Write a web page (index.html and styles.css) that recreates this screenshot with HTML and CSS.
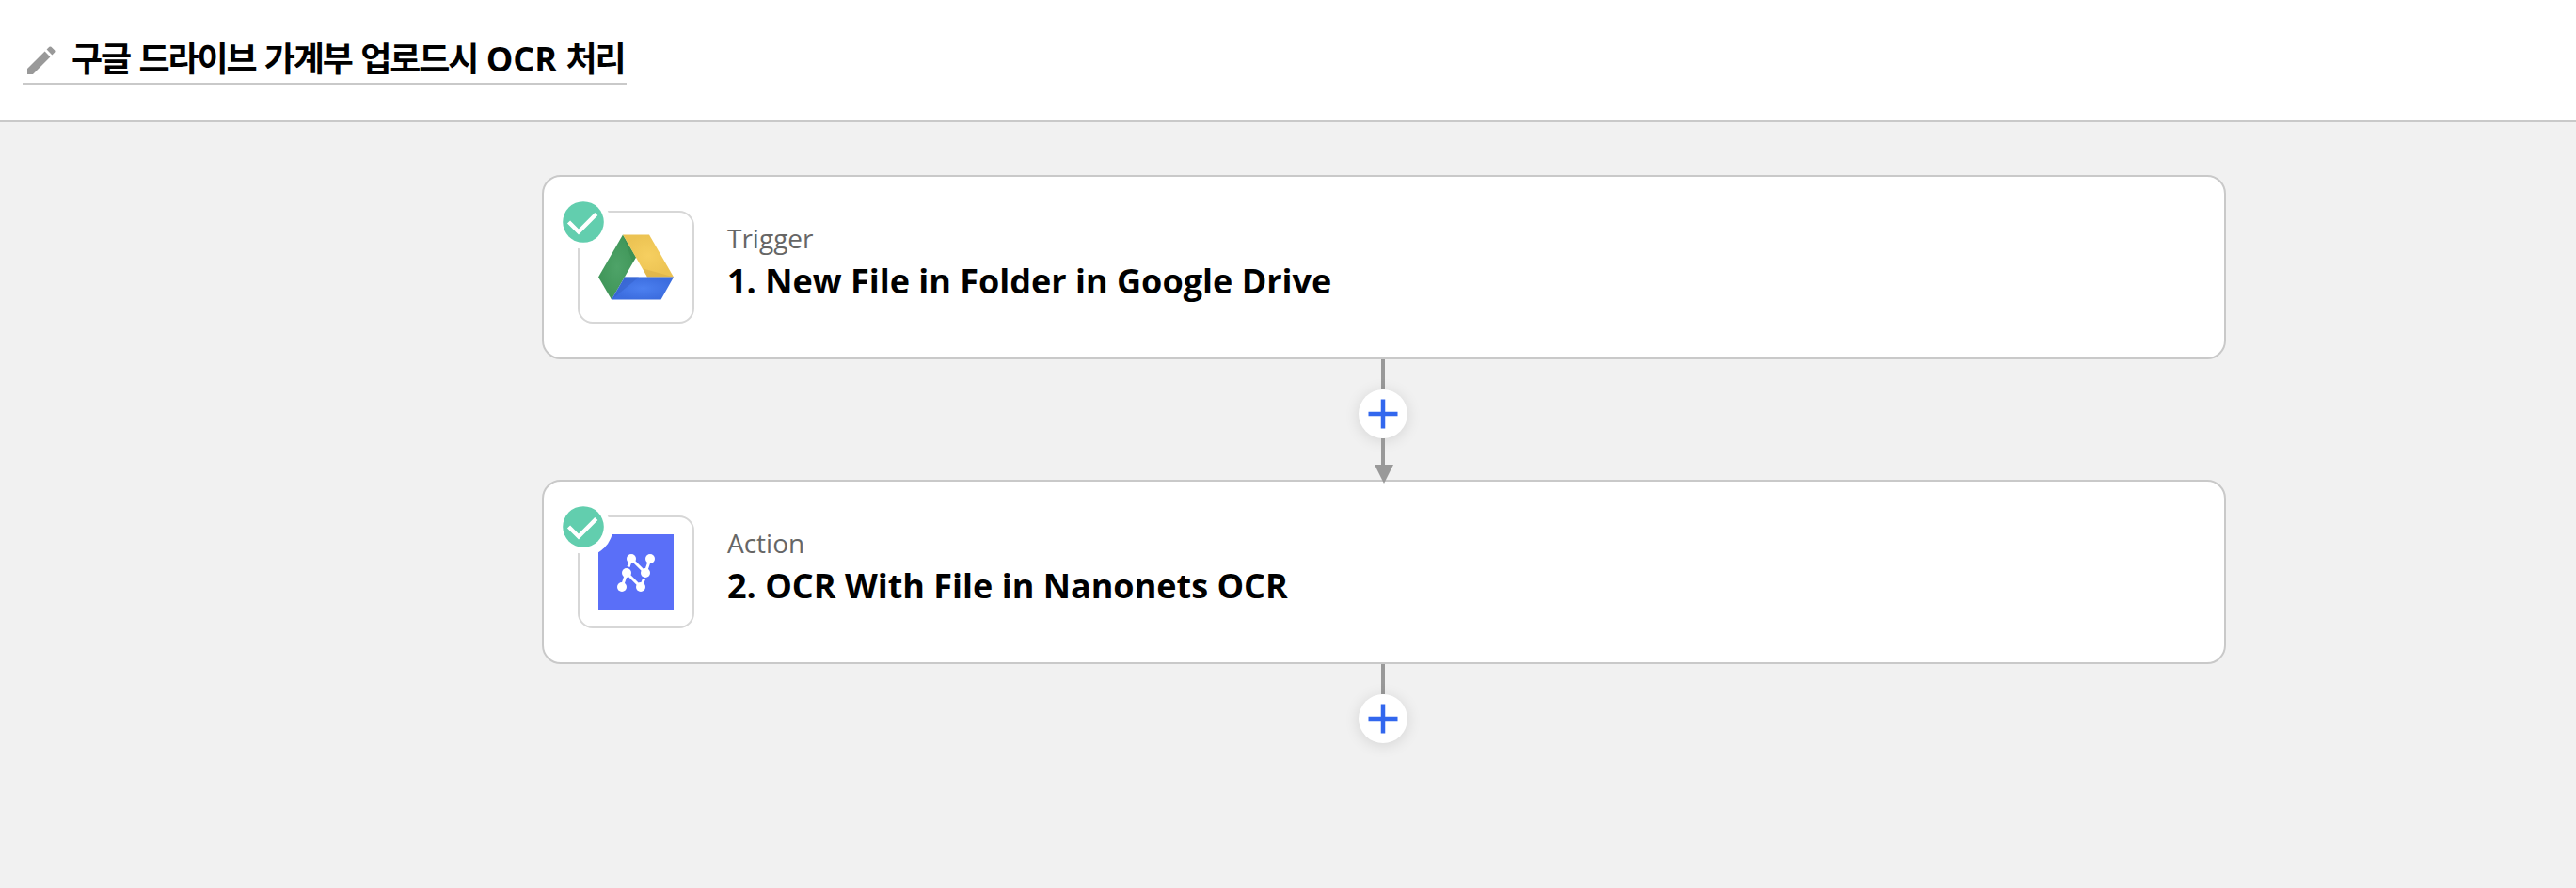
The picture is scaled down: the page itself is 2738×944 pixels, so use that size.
FILE: index.html
```html
<!DOCTYPE html>
<html lang="ko">
<head>
<meta charset="utf-8">
<title>구글 드라이브 가계부 업로드시 OCR 처리</title>
<link rel="stylesheet" href="styles.css">
</head>
<body>
<header class="header">
  <div class="zap-title">
    <svg class="pencil" width="30" height="30" viewBox="0 0 30 30" fill="#999"><path d="M0 24L18.6 5.6L24.4 11.4L6 30H0ZM20.6 3.6L23.4 .8Q24.4 0 25.4 .8L29.2 4.6Q30 5.6 29.2 6.6L26.4 9.4Z"/></svg>
    <h1 class="title">구글 드라이브 가계부 업로드시 <span class="latin">OCR</span> 처리</h1>
  </div>
</header>
<main class="canvas">
  <section class="card">
    <div class="app">
      <svg class="logo" width="80" height="80" viewBox="0 0 80 80">
        <defs>
          <radialGradient id="green"><stop offset="0" stop-color="#4ea368"/><stop offset="1" stop-color="#409659"/></radialGradient>
          <radialGradient id="yellow"><stop offset="0" stop-color="#f6cf60"/><stop offset="1" stop-color="#ecc353"/></radialGradient>
          <radialGradient id="blue"><stop offset="0" stop-color="#4c80f0"/><stop offset="1" stop-color="#3c6ddf"/></radialGradient>
        </defs>
        <path fill="url(#green)" d="M26 5.5L40 29.5L14 74.5L0 50.5Z"/>
        <path fill="#388950" d="M26 5.5L40 29.5L36.5 35Z" opacity=".5"/>
        <path fill="url(#yellow)" d="M26 5.5H54L80 50.5H52Z"/>
        <path fill="#d9af46" d="M80 50.5H52L47.5 41.5Z" opacity=".6"/>
        <path fill="url(#blue)" d="M28 50.5H80L66.500 74.500H14Z"/>
        <path fill="#345fc8" d="M28 50.5H43L14 74.500Z" opacity=".5"/>
      </svg>
      <svg class="badge" width="62" height="62" viewBox="0 0 62 62"><circle cx="31" cy="31" r="28.500" fill="#fff"/><circle cx="31" cy="31" r="21.800" fill="#62ceae"/><path d="M15.500 31L26 41.500L44.800 22.500" fill="none" stroke="#fff" stroke-width="4.400"/></svg>
    </div>
    <div class="text">
      <p class="kind">Trigger</p>
      <h2 class="step">1. New File in Folder in Google Drive</h2>
    </div>
  </section>
  <div class="connector">
    <span class="line"></span>
    <button class="add" aria-label="Add step"><svg width="32" height="32" viewBox="0 0 32 32"><path d="M16 .5V31.500M.5 16H31.500" stroke="#3267ee" stroke-width="4.500"/></svg></button>
    <span class="line"></span>
    <svg class="arrow" width="20" height="20" viewBox="0 0 20 20"><path d="M0 0H20L10 20Z" fill="#999"/></svg>
  </div>
  <section class="card">
    <div class="app">
      <svg class="logo" width="80" height="80" viewBox="0 0 80 80">
        <rect width="80" height="80" fill="#5a6ff8"/>
        <circle cx="-16.300" cy="-8.300" r="32" fill="#fff"/>
        <g stroke="#fff" stroke-width="3.100" fill="none"><path d="M25 56L30 41L45 56L48.500 47.500"/><path d="M32 34.500L35 26L50 41L55 26"/></g>
        <g fill="#fff"><circle cx="25" cy="56" r="5"/><circle cx="30" cy="41" r="5"/><circle cx="45" cy="56" r="5"/><circle cx="35" cy="26" r="5"/><circle cx="50" cy="41" r="5"/><circle cx="55" cy="26" r="5"/></g>
      </svg>
      <svg class="badge" width="62" height="62" viewBox="0 0 62 62"><circle cx="31" cy="31" r="28.500" fill="#fff"/><circle cx="31" cy="31" r="21.800" fill="#62ceae"/><path d="M15.500 31L26 41.500L44.800 22.500" fill="none" stroke="#fff" stroke-width="4.400"/></svg>
    </div>
    <div class="text">
      <p class="kind">Action</p>
      <h2 class="step">2. OCR With File in Nanonets OCR</h2>
    </div>
  </section>
  <div class="connector">
    <span class="line"></span>
    <button class="add" aria-label="Add step"><svg width="32" height="32" viewBox="0 0 32 32"><path d="M16 .5V31.500M.5 16H31.500" stroke="#3267ee" stroke-width="4.500"/></svg></button>
  </div>
</main>
</body>
</html>
```

FILE: styles.css
```css
* { box-sizing: border-box; margin: 0; padding: 0; }
body {
  height: 944px;
  overflow: hidden;
  background: #f1f1f1;
  color: #000;
  font-family: "Open Sans", "Noto Sans CJK KR", sans-serif;
}
.header {
  height: 130px;
  padding: 36px 24px 0;
  background: #fff;
  border-bottom: 2px solid #c9c9c9;
}
.zap-title {
  display: flex;
  width: 642px;
  height: 54px;
  padding-left: 5px;
  border-bottom: 2px solid #c9c9c9;
}
.pencil { margin-top: 13px; flex: none; }
.title {
  margin-left: 17px;
  padding-top: 1px;
  font-size: 36px;
  line-height: 52px;
  font-weight: 700;
  letter-spacing: -2.1px;
  word-spacing: 2.1px;
  white-space: nowrap;
}
.latin { letter-spacing: 0; }
.canvas {
  display: flex;
  flex-direction: column;
  align-items: center;
  padding: 56px 0 0 204px;
}
.card {
  display: flex;
  width: 1790px;
  height: 196px;
  padding: 36px;
  background: #fff;
  border: 2px solid #c9c9c9;
  border-radius: 20px;
}
.app {
  position: relative;
  display: flex;
  align-items: center;
  justify-content: center;
  width: 124px;
  height: 120px;
  border: 2px solid #d7d7d7;
  border-radius: 16px;
}
.badge { position: absolute; left: -27.300px; top: -21.300px; }
.text { padding: 8px 0 0 35px; }
.kind {
  color: #666;
  font-size: 28px;
  line-height: 42px;
}
.step {
  margin-top: 1px;
  font-size: 36px;
  line-height: 48px;
  font-weight: 700;
}
.connector {
  position: relative;
  display: flex;
  flex-direction: column;
  align-items: center;
  height: 128px;
  margin-right: 2px;
}
.line { width: 4px; height: 32px; background: #999; }
.add {
  display: flex;
  align-items: center;
  justify-content: center;
  width: 52px;
  height: 52px;
  border: 0;
  border-radius: 50%;
  background: #fff;
  box-shadow: 0 2px 16px rgba(0, 0, 0, .12);
}
.arrow { position: absolute; left: 17px; top: 112px; z-index: 1; }
```
